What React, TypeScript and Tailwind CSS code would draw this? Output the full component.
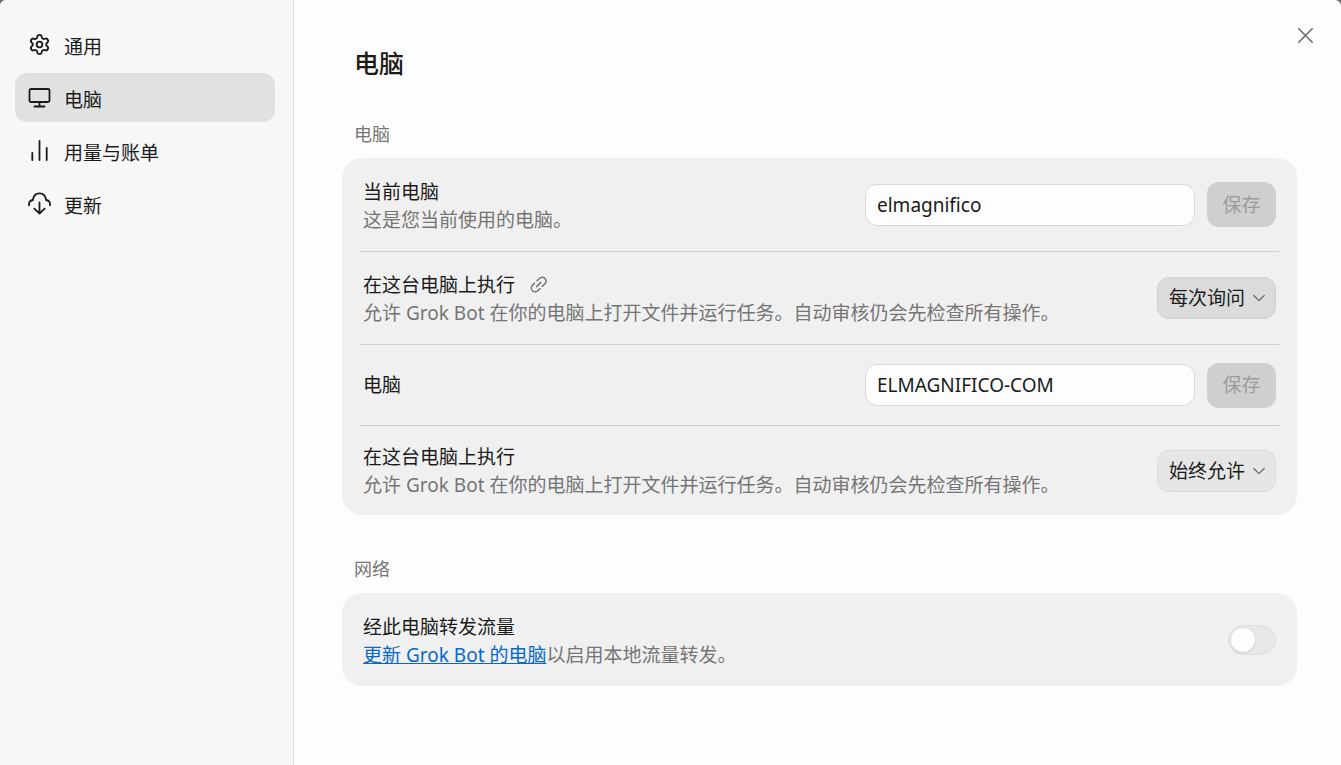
import React, {useState} from 'react';
import {Settings} from 'lucide-react';

const MonitorIcon = () => (
    <svg width="24" height="24" viewBox="0 0 24 24" fill="none" stroke="currentColor" strokeWidth="1.8" strokeLinecap="round" strokeLinejoin="round">
        <rect x="1.500" y="3" width="20" height="13" rx="1.5" />
        <path d="M11.500 16v4.500M6.500 20.500h10" />
    </svg>
);

const BarsIcon = () => (
    <svg width="24" height="24" viewBox="0 0 24 24" fill="none" stroke="currentColor" strokeWidth="1.8" strokeLinecap="round">
        <path d="M4.300 14v7M11.500 2v19M18.700 9v12" />
    </svg>
);

const CloudIcon = () => (
    <svg width="24" height="24" viewBox="0 0 24 24" fill="none" stroke="currentColor" strokeWidth="1.8" strokeLinecap="round" strokeLinejoin="round">
        <path d="M1 13.300v-1c0-2.300 1.500-3.900 3.900-4.300C5.500 3.800 7.900 1.300 11.500 1.300s6 2.500 6.600 6.700c2.400.4 3.900 2 3.900 4.300v1" />
        <path d="M11.500 10.500v11M6.300 16.700l5.200 4.800 5.200-4.800" />
    </svg>
);

const LinkIcon = () => (
    <svg width="20" height="20" viewBox="0 0 20 20" fill="none" stroke="currentColor" strokeWidth="1.5" strokeLinecap="round" strokeLinejoin="round">
        <path d="M8 5.800l2.600-2.300a3.700 3.700 0 0 1 5.400 5.100l-2.600 2.600" />
        <path d="M5.500 8.200l-2.100 2.200a3.700 3.700 0 0 0 5.300 5.300l2.300-2.100" />
        <path d="M7.600 11.600l4.200-4.200" />
    </svg>
);

const ChevronIcon = () => (
    <svg width="12" height="12" viewBox="0 0 12 12" fill="none" stroke="currentColor" strokeWidth="1.2" strokeLinecap="round" strokeLinejoin="round" className="pointer-events-none absolute top-[15px] right-[11px] text-[#666666]">
        <path d="M.8 3.500L6 8.700l5.200-5.200" />
    </svg>
);

const CloseIcon = () => (
    <svg width="15" height="15" viewBox="0 0 15 15" fill="none" stroke="currentColor" strokeWidth="1.5" strokeLinecap="round">
        <path d="M.8.8l13.400 13.400M14.200.8L.8 14.200" />
    </svg>
);

const navItems = [
    {label: '通用', icon: <Settings size={23} strokeWidth={1.9} />},
    {label: '电脑', icon: <MonitorIcon />},
    {label: '用量与账单', icon: <BarsIcon />},
    {label: '更新', icon: <CloudIcon />},
];

const executeHint = '允许 Grok Bot 在你的电脑上打开文件并运行任务。自动审核仍会先检查所有操作。';

const Sidebar = () => (
    <nav className="flex w-[294px] shrink-0 flex-col gap-1 border-r border-[#dcdcdc] bg-[#f7f7f7] py-5 pr-[18px] pl-[15px]">
        {navItems.map((item, index) => (
            <button
                key={item.label}
                type="button"
                aria-current={index === 1 ? 'page' : undefined}
                className={`flex h-[49px] items-center gap-3 rounded-[12px] px-[13px] text-left ${index === 1 ? 'bg-[#e1e1e1]' : ''}`}
            >
                <span className="flex size-6 items-center">{item.icon}</span>
                <span className="pt-1">{item.label}</span>
            </button>
        ))}
    </nav>
);

const NameForm = ({id, label, initial}: {id: string; label: string; initial: string}) => {
    const [name, setName] = useState(initial);
    return (
        <div className="flex shrink-0 items-center gap-3">
            <input
                id={id}
                type="text"
                aria-label={label}
                value={name}
                onChange={(e) => setName(e.target.value)}
                className="h-[42px] w-[330px] rounded-[12px] border border-[#dadada] bg-[#fdfdfd] px-[11px] outline-none"
            />
            <button
                type="button"
                disabled={name === initial}
                className="h-[45px] w-[69px] rounded-[12px] bg-[#cfcfcf] disabled:text-[#9c9c9c]"
            >
                保存
            </button>
        </div>
    );
};

const PolicySelect = ({id, initial, tone}: {id: string; initial: string; tone: string}) => (
    <div className="relative shrink-0">
        <select
            id={id}
            defaultValue={initial}
            className={`h-[42px] w-[119px] appearance-none rounded-[12px] border px-[11px] outline-none ${tone}`}
        >
            <option>每次询问</option>
            <option>始终允许</option>
        </select>
        <ChevronIcon />
    </div>
);

const App = () => {
    const [forward, setForward] = useState(false);
    return (
        <div className="min-h-screen bg-[#6b6b6b]">
            <div className="relative flex min-h-screen overflow-hidden rounded-t-[6px] bg-[#fdfdfd] font-['Noto_Sans','Noto_Sans_CJK_SC',sans-serif] text-[19px] leading-7 text-[#1a1a1a]">
                <Sidebar />
                <main className="min-w-0 grow pt-[45px] pr-11 pl-12">
                    <h1 className="mb-10 pl-3 text-[25px] leading-9 font-medium">电脑</h1>

                    <section>
                        <h2 className="mb-[10px] pl-3 text-[18px] leading-[27px] text-[#757575]">电脑</h2>
                        <div className="rounded-[20px] bg-[#f0f0f0] px-[18px]">
                            <div className="flex min-h-[94px] items-center justify-between gap-6 border-b border-[#cfcfcf] px-[3px]">
                                <div className="pt-[2px]">
                                    <label htmlFor="current-name" className="block">当前电脑</label>
                                    <p className="text-[#757575]">这是您当前使用的电脑。</p>
                                </div>
                                <NameForm id="current-name" label="当前电脑" initial="elmagnifico" />
                            </div>
                            <div className="flex min-h-[93px] items-center justify-between gap-6 border-b border-[#cfcfcf] px-[3px]">
                                <div className="pt-[2px]">
                                    <div className="flex items-center gap-[14px]">
                                        <label htmlFor="current-policy">在这台电脑上执行</label>
                                        <button type="button" aria-label="链接" className="text-[#757575]"><LinkIcon /></button>
                                    </div>
                                    <p className="text-[#757575]">{executeHint}</p>
                                </div>
                                <PolicySelect id="current-policy" initial="每次询问" tone="border-[#cfcfcf] bg-[#dbdbdb]" />
                            </div>
                            <div className="flex min-h-[81px] items-center justify-between gap-6 border-b border-[#cfcfcf] px-[3px]">
                                <label htmlFor="other-name">电脑</label>
                                <NameForm id="other-name" label="电脑" initial="ELMAGNIFICO-COM" />
                            </div>
                            <div className="flex min-h-[89px] items-center justify-between gap-6 px-[3px]">
                                <div>
                                    <label htmlFor="other-policy" className="block">在这台电脑上执行</label>
                                    <p className="text-[#757575]">{executeHint}</p>
                                </div>
                                <PolicySelect id="other-policy" initial="始终允许" tone="border-[#dadada] bg-[#e6e6e6]" />
                            </div>
                        </div>
                    </section>

                    <section className="mt-[41px]">
                        <h2 className="mb-[10px] pl-3 text-[18px] leading-[27px] text-[#757575]">网络</h2>
                        <div className="rounded-[20px] bg-[#f0f0f0] px-[18px]">
                            <div className="flex min-h-[93px] items-center justify-between gap-6 px-[3px]">
                                <div className="pt-[2px]">
                                    <label htmlFor="forward" className="block">经此电脑转发流量</label>
                                    <p className="text-[#757575]">
                                        <a href="#update" className="text-[#0969c9] underline">更新 Grok Bot 的电脑</a>以启用本地流量转发。
                                    </p>
                                </div>
                                <input
                                    id="forward"
                                    type="checkbox"
                                    role="switch"
                                    checked={forward}
                                    onChange={(e) => setForward(e.target.checked)}
                                    className="flex h-[30px] w-12 shrink-0 appearance-none items-center rounded-full border border-[#e0e0e0] bg-[#e7e7e7] px-[2px] before:size-6 before:rounded-full before:bg-[#fdfdfd] before:shadow-sm before:content-[''] checked:justify-end checked:bg-[#0969c9]"
                                />
                            </div>
                        </div>
                    </section>
                </main>
                <button type="button" aria-label="关闭" className="absolute top-7 right-7 text-[#666666]">
                    <CloseIcon />
                </button>
            </div>
        </div>
    );
};

export default App;
